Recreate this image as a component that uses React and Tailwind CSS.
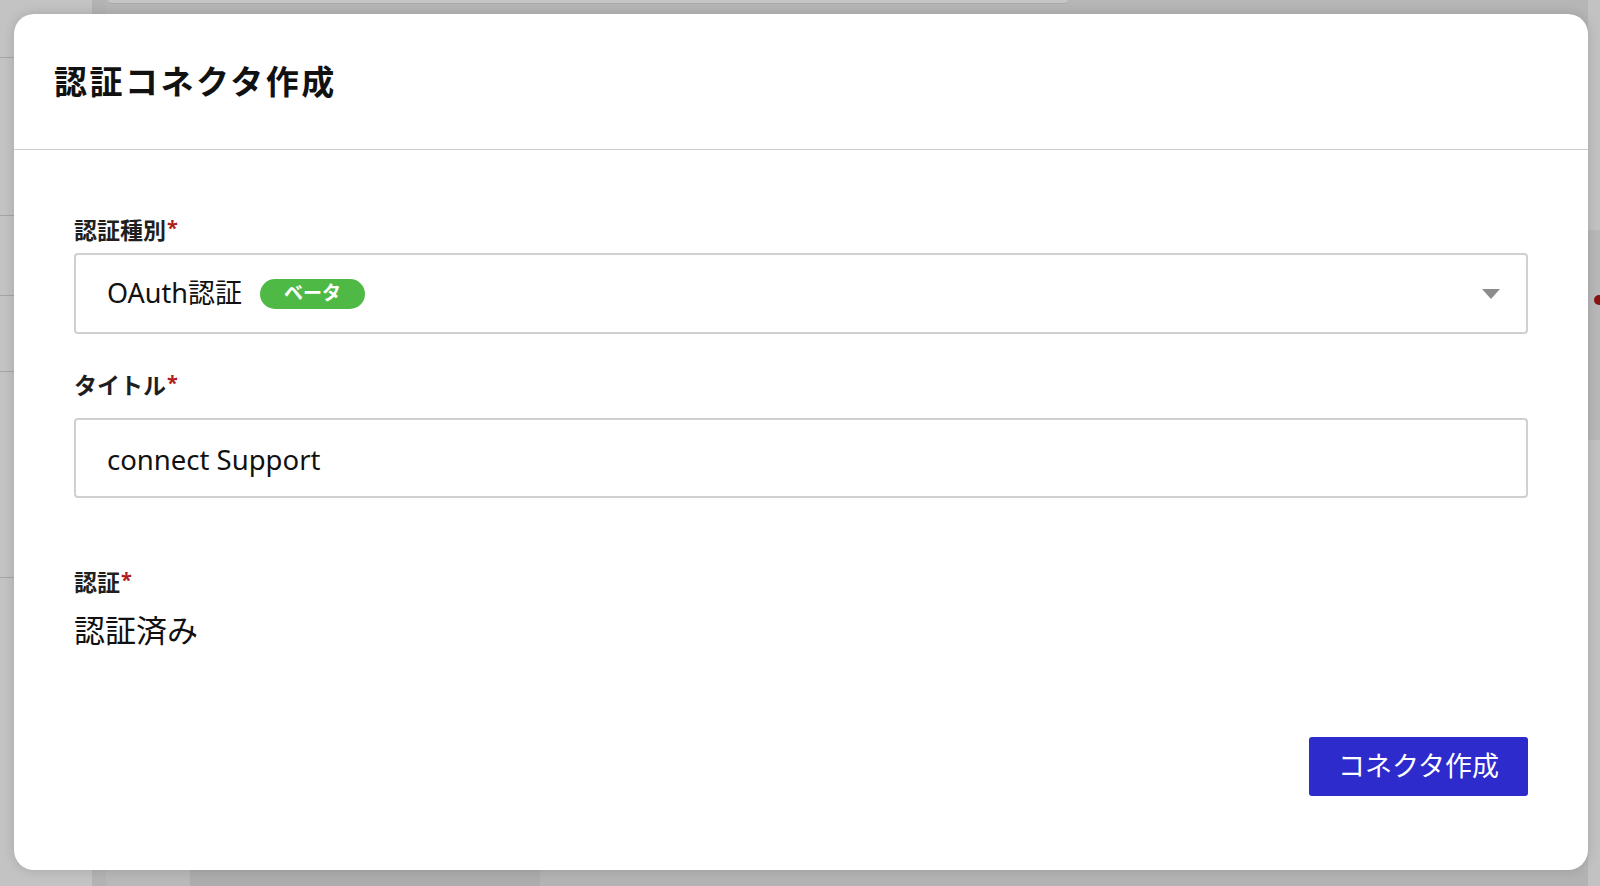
import React from "react";

const font = { fontFamily: '"Noto Sans", "Noto Sans CJK JP", sans-serif' };

const Label = ({ children, className = "" }) => (
  <div className={`flex items-start h-[30px] leading-[30px] text-[23px] font-bold text-[#1f1f1f] ${className}`}>
    <span>{children}</span>
    <span className="text-[#b01c1c] text-[20px] leading-[26px] ml-[1px]">*</span>
  </div>
);

// faint page behind the overlay
const Backdrop = () => (
  <div className="absolute inset-0 flex">
    <div className="w-[92px] h-full bg-[#c3c3c3] flex flex-col">
      <div className="h-[58px] border-b border-[#a5a5a5]" />
      <div className="h-[158px] border-b border-[#a5a5a5]" />
      <div className="h-[80px] border-b border-[#a5a5a5]" />
      <div className="h-[76px] border-b border-[#a5a5a5]" />
      <div className="h-[206px] border-b border-[#a5a5a5]" />
    </div>
    <div className="w-[14px] h-full bg-[#b3b3b3]" />
    <div className="flex-1 h-full bg-[#b6b6b6] flex flex-col">
      <div className="ml-[2px] w-[960px] h-[4px] bg-[#c6c6c6] rounded-b border-b border-[#aaaaaa]" />
      <div className="flex-1" />
      <div className="flex h-[16px]">
        <div className="w-[84px] bg-[#b8b8b8]" />
        <div className="w-[350px] bg-[#acacac]" />
        <div className="flex-1 bg-[#b3b3b3]" />
      </div>
    </div>
    <div className="w-[12px] h-full bg-[#c2c2c2] flex flex-col">
      <div className="h-[230px]" />
      <div className="h-[210px] bg-[#b8b8b8] flex items-center justify-end pb-[70px]">
        <div className="w-[6px] h-[10px] rounded-l-full bg-[#8a1414]" />
      </div>
    </div>
  </div>
);

export default function App() {
  return (
    <div className="relative w-[1600px] h-[886px] overflow-hidden bg-[#bdbdbd]" style={font}>
      <Backdrop />
      <div className="absolute left-[14px] top-[14px] w-[1574px] h-[856px] rounded-[20px] bg-white shadow-[0_0_12px_rgba(0,0,0,0.15)] flex flex-col">
        <div className="h-[136px] flex items-center pl-[40px] border-b border-[#cfcfcf]">
          <h1 className="text-[33px] font-bold text-[#111] tracking-[2.5px]">認証コネクタ作成</h1>
        </div>
        <div className="flex-1 flex flex-col px-[60px] pt-[65px] pb-[74px]">
          <Label>認証種別</Label>
          <div className="mt-[8px] h-[81px] border-2 border-[#d0d0d0] rounded-[4px] flex items-center pl-[31px] pr-[26px]">
            <span className="text-[27px] text-[#111]">OAuth認証</span>
            <span className="ml-[18px] w-[105px] h-[30px] rounded-full bg-[#4fb946] text-white text-[19px] font-bold flex items-center justify-center">ベータ</span>
            <div className="flex-1" />
            <svg width="18" height="10" viewBox="0 0 18 10">
              <path d="M0 0H18L9 10Z" fill="#8c8c8c" />
            </svg>
          </div>
          <Label className="mt-[36px]">タイトル</Label>
          <div className="mt-[18px] h-[80px] border-2 border-[#d0d0d0] rounded-[4px] flex items-center pl-[31px] pt-[3px]">
            <span className="text-[27.5px] text-[#111]">connect Support</span>
          </div>
          <Label className="mt-[69px]">認証</Label>
          <div className="mt-[13px] text-[31px] leading-[40px] text-[#111]">認証済み</div>
          <div className="flex-1" />
          <div className="flex justify-end">
            <button className="w-[219px] h-[59px] rounded-[3px] bg-[#2e2bcc] text-white text-[27px] flex items-center justify-center">
              コネクタ作成
            </button>
          </div>
        </div>
      </div>
    </div>
  );
}
